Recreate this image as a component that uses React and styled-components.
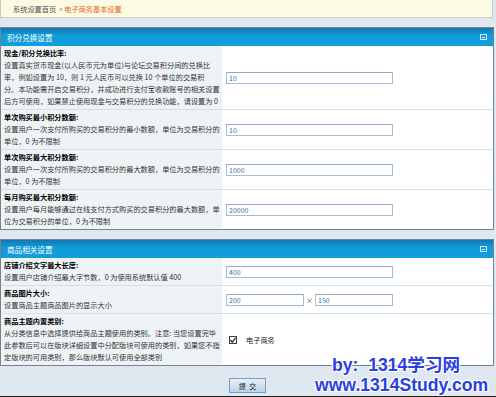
import styled, { createGlobalStyle } from 'styled-components';

const GlobalStyle = createGlobalStyle`
  html, body { margin: 0; padding: 0; background: #fff; }
  * { box-sizing: border-box; }
`;

const Page = styled.div`
  position: relative;
  width: 496px;
  height: 397px;
  background: #dfe7f0;
  border-bottom: 1px solid #1e1e1e;
  font-family: "Noto Sans CJK SC", "DejaVu Sans", sans-serif;
  font-size: 7.2px;
  overflow: hidden;
`;

const Crumb = styled.div`
  height: 18px;
  margin-right: 3px;
  margin-bottom: 9px;
  padding-left: 12px;
  display: flex;
  align-items: center;
  gap: 3px;
  background: #fbfae3;
  border: 1px solid #c9d0bd;
  border-top: none;
  color: #555;
`;

const CrumbCurrent = styled.span`
  color: #e8661a;
`;

const Panel = styled.section`
  margin-right: 2px;
  margin-bottom: ${(p) => p.$gap || 0}px;
  border: 1px solid #74838e;
  background: #fff;
`;

const Header = styled.div`
  height: 18px;
  padding: 0 6px;
  display: flex;
  align-items: center;
  color: #fff;
  font-size: 7.6px;
  background: linear-gradient(#1277b3, #129bd9 40%, #149ddb);
`;

const Collapse = styled.span`
  margin-left: auto;
  width: 7px;
  height: 6px;
  border: 1px solid #cfeaf8;
  display: flex;
  align-items: center;
  justify-content: center;
  &::after {
    content: '';
    width: 3px;
    height: 1px;
    background: #cfeaf8;
  }
`;

const Row = styled.div`
  display: grid;
  grid-template-columns: 221px 1fr;
  border-bottom: 1px solid #d2dfec;
  &:last-child { border-bottom: none; }
`;

const Label = styled.div`
  padding: 1px 3px 2px;
  background: #eef4f6;
  line-height: 12px;
  color: #333;
`;

const Title = styled.div`
  font-weight: bold;
  color: #000;
  white-space: nowrap;
`;

const Line = styled.div`
  white-space: nowrap;
`;

const Value = styled.div`
  display: flex;
  align-items: center;
  gap: 2px;
  padding-left: 4px;
`;

const Input = styled.input`
  width: ${(p) => p.$w || 167}px;
  height: 12px;
  padding: 0 2px;
  border: 1px solid #a3bcd8;
  border-top-color: #8fa9c8;
  font-family: inherit;
  font-size: 7px;
  color: #3b6c93;
  background: #fff;
  outline: none;
`;

const Times = styled.span`
  color: #444;
  font-size: 7px;
`;

const Check = styled.label`
  display: flex;
  align-items: center;
  gap: 9px;
  padding-left: 3px;
  color: #222;
`;

const Box = styled.span`
  width: 8px;
  height: 8px;
  border: 1px solid #3a3a3a;
  background: #fff;
  display: flex;
  align-items: center;
  justify-content: center;
`;

const Footer = styled.div`
  padding: 12px 0 0 229px;
`;

const Submit = styled.button`
  width: 37px;
  height: 15px;
  padding: 0;
  border: 1px solid #7e9cba;
  background: linear-gradient(#e4eff8, #bcd5ea);
  font-family: inherit;
  font-size: 7.2px;
  color: #222;
  letter-spacing: 3px;
  text-indent: 3px;
`;

const Watermark = styled.div`
  position: absolute;
  left: 315px;
  top: 355px;
  font-family: "Liberation Sans", Arial, "Noto Sans CJK SC", sans-serif;
  font-weight: bold;
  font-size: 17.6px;
  line-height: 20px;
  color: #2c3fe0;
  text-shadow: 1px 1px 1px #fff, -1px -1px 1px #fff, 1px -1px 1px #fff, -1px 1px 1px #fff;
  white-space: pre;
  pointer-events: none;
`;

const WmLine = styled.div`
  padding-left: ${(p) => p.$indent || 0}px;
`;

const exchangeRows = [
  {
    title: '现金/积分兑换比率:',
    lines: [
      '设置真实货币现金(以人民币元为单位)与论坛交易积分间的兑换比',
      '率，例如设置为 10，则 1 元人民币可以兑换 10 个单位的交易积',
      '分。本功能需开启交易积分，并成功进行支付宝收款账号的相关设置',
      '后方可使用，如果禁止使用现金与交易积分的兑换功能，请设置为 0',
    ],
    value: '10',
  },
  {
    title: '单次购买最小积分数额:',
    lines: ['设置用户一次支付所购买的交易积分的最小数额，单位为交易积分的', '单位，0 为不限制'],
    value: '10',
  },
  {
    title: '单次购买最大积分数额:',
    lines: ['设置用户一次支付所购买的交易积分的最大数额，单位为交易积分的', '单位，0 为不限制'],
    value: '1000',
  },
  {
    title: '每月购买最大积分数额:',
    lines: ['设置用户每月能够通过在线支付方式购买的交易积分的最大数额，单', '位为交易积分的单位，0 为不限制'],
    value: '20000',
  },
];

function RowLabel({ title, lines }) {
  return (
    <Label>
      <Title>{title}</Title>
      {lines.map((l) => (
        <Line key={l}>{l}</Line>
      ))}
    </Label>
  );
}

export default function App() {
  return (
    <Page>
      <GlobalStyle />
      <Crumb>
        系统设置首页
        <CrumbCurrent>» 电子商务基本设置</CrumbCurrent>
      </Crumb>

      <Panel $gap={9}>
        <Header>
          积分兑换设置
          <Collapse />
        </Header>
        {exchangeRows.map((r) => (
          <Row key={r.title}>
            <RowLabel title={r.title} lines={r.lines} />
            <Value>
              <Input defaultValue={r.value} />
            </Value>
          </Row>
        ))}
      </Panel>

      <Panel>
        <Header>
          商品相关设置
          <Collapse />
        </Header>
        <Row>
          <RowLabel title="店铺介绍文字最大长度:" lines={['设置用户店铺介绍最大字节数，0 为使用系统默认值 400']} />
          <Value>
            <Input defaultValue="400" />
          </Value>
        </Row>
        <Row>
          <RowLabel title="商品图片大小:" lines={['设置商品主题商品图片的显示大小']} />
          <Value>
            <Input $w={78} defaultValue="200" />
            <Times>×</Times>
            <Input $w={78} defaultValue="150" />
          </Value>
        </Row>
        <Row>
          <RowLabel
            title="商品主题内置类别:"
            lines={[
              '从分类信息中选择提供给商品主题使用的类别。注意: 当您设置完毕',
              '此参数后可以在版块详细设置中分配版块可使用的类别，如果您不指',
              '定版块的可用类别，那么版块默认可使用全部类别',
            ]}
          />
          <Value>
            <Check>
              <Box>
                <svg width="6" height="6" viewBox="0 0 6 6">
                  <path d="M0.5 3 L2.3 5 L5.5 0.8" fill="none" stroke="#222" strokeWidth="1.2" />
                </svg>
              </Box>
              电子商务
            </Check>
          </Value>
        </Row>
      </Panel>

      <Footer>
        <Submit>提交</Submit>
      </Footer>

      <Watermark>
        <WmLine $indent={17}>by:  1314学习网</WmLine>
        <WmLine>www.1314Study.com</WmLine>
      </Watermark>
    </Page>
  );
}
